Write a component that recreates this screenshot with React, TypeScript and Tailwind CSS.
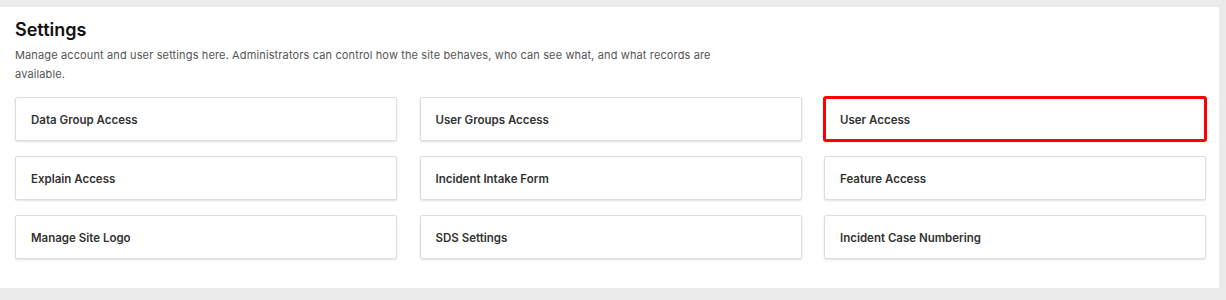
import React from "react"

/* ---------------- DATA ---------------- */

const ITEMS = [
  "Data Group Access",
  "User Groups Access",
  "User Access",
  "Explain Access",
  "Incident Intake Form",
  "Feature Access",
  "Manage Site Logo",
  "SDS Settings",
  "Incident Case Numbering",
]

const HIGHLIGHT = "User Access"

/* ---------------- PAGE ---------------- */

export default function App() {
  return (
    <div
      className="w-[1226px] h-[300px] bg-[#ebebeb] pt-[7px] pr-[7px]"
      style={{ fontFamily: "Inter, 'Noto Sans', sans-serif" }}
    >
      <div className="bg-white h-[281px] pl-[15px] pr-[13px] pt-[11px]">
        <h1 className="text-[18px] leading-[24px] font-semibold text-[#111]">
          Settings
        </h1>
        <p className="mt-[4px] max-w-[720px] text-[11px] tracking-[0.13px] leading-[19px] text-[#555]">
          Manage account and user settings here. Administrators can control how the site
          behaves, who can see what, and what records are available.
        </p>

        <div className="mt-[13px] grid grid-cols-3 gap-x-[22.5px] gap-y-[15px]">
          {ITEMS.map((label) => (
            <button
              key={label}
              className={`h-[44px] text-left px-[15px] pt-[3px] bg-white rounded-[2px] text-[11.5px] font-semibold text-[#333] border border-[#dedede] shadow-[0_1px_2px_rgba(0,0,0,0.12)] ${
                label === HIGHLIGHT
                  ? "outline-[3px] outline-solid outline-[#ff0000] -outline-offset-2"
                  : ""
              }`}
            >
              {label}
            </button>
          ))}
        </div>
      </div>
    </div>
  )
}
